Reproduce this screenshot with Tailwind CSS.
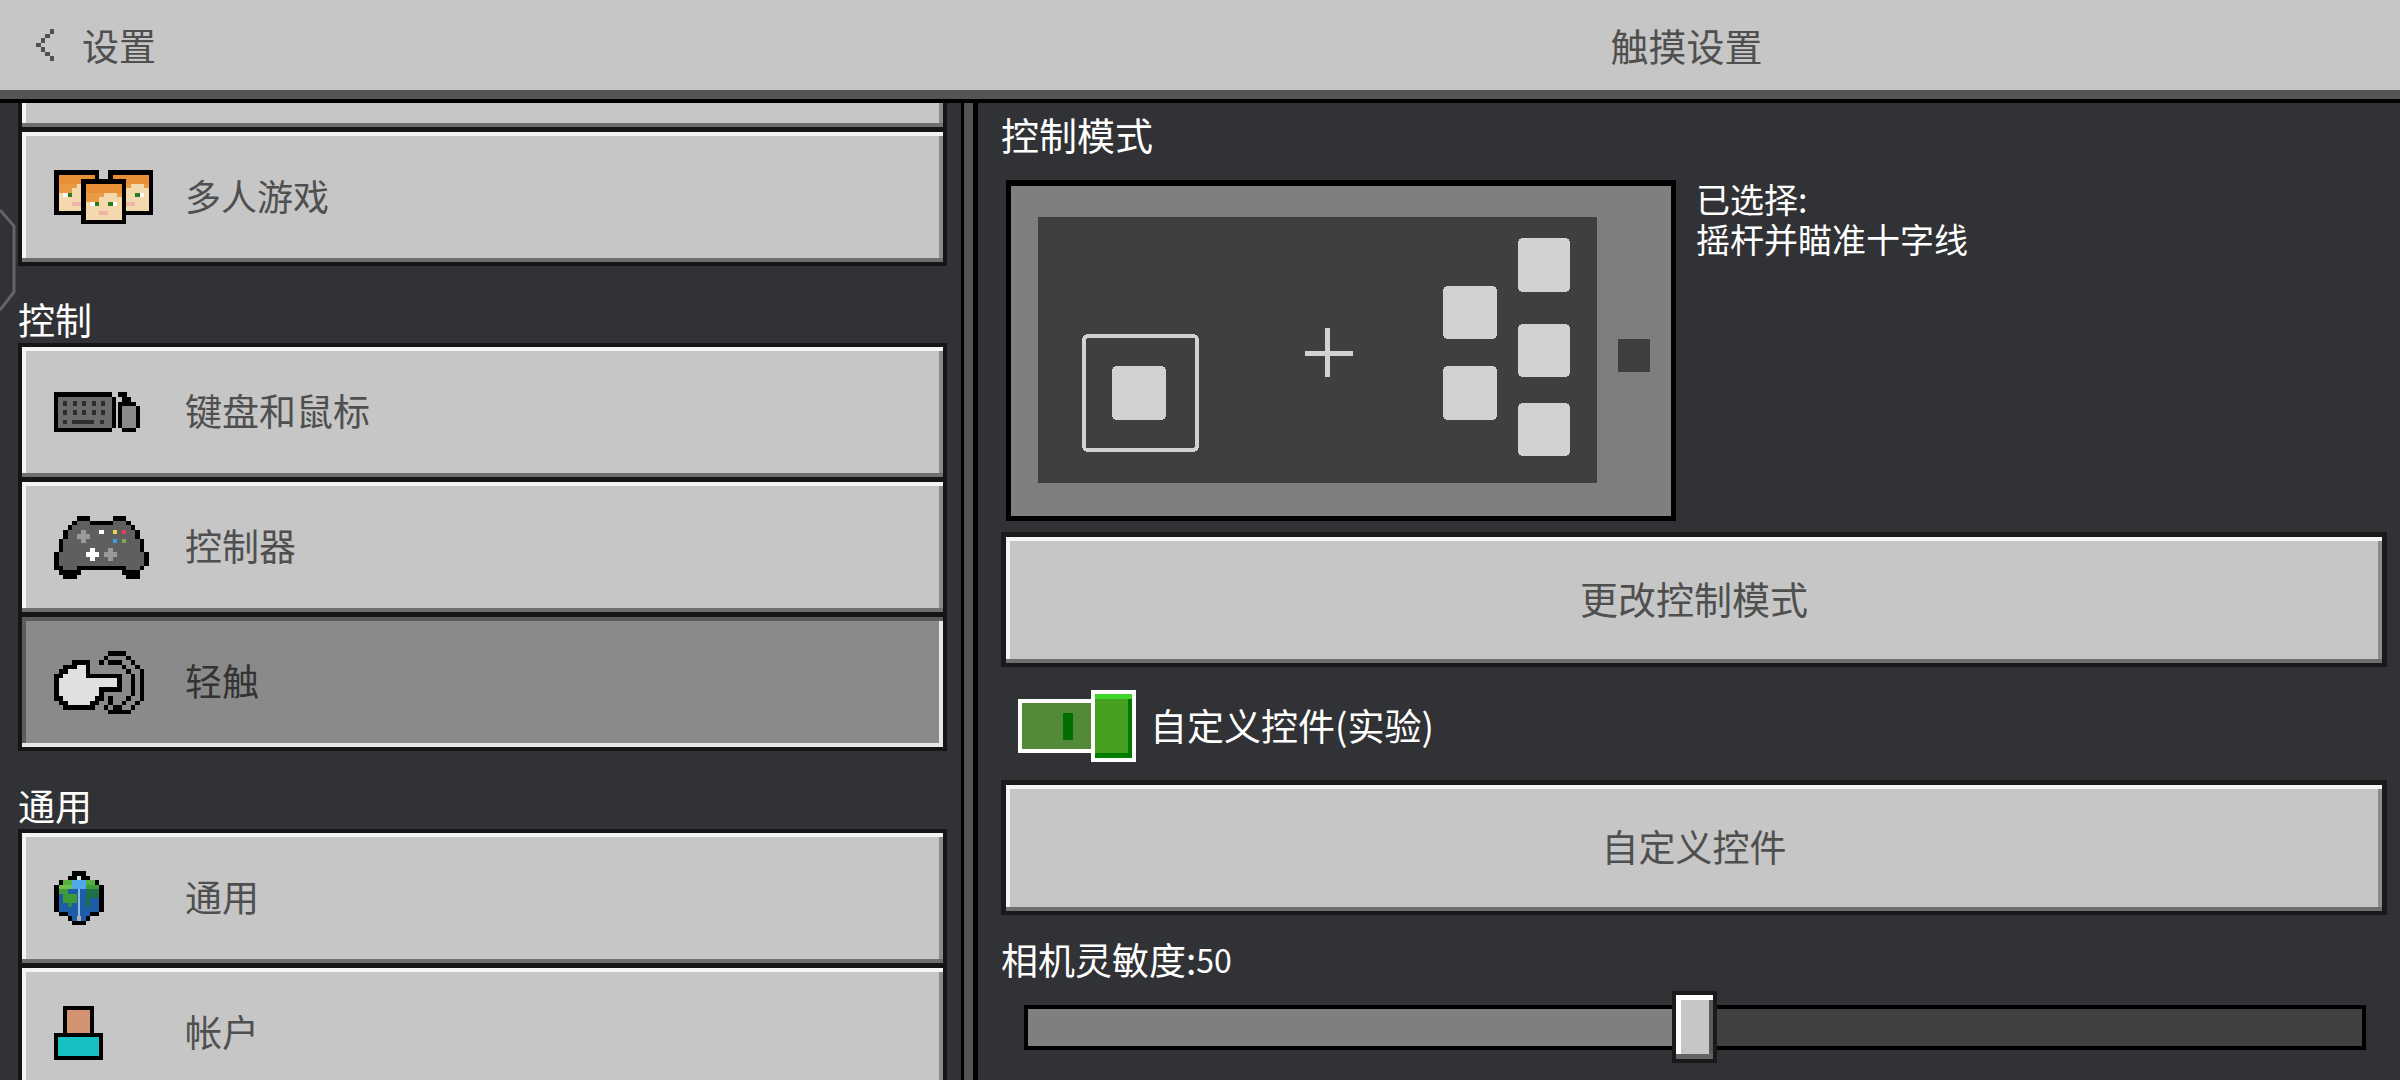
<!DOCTYPE html>
<html lang="zh-CN">
<head>
    <meta charset="UTF-8">
    <title>触摸设置</title>
    <script src="https://cdn.jsdelivr.net/npm/@tailwindcss/browser@4"></script>
</head>
<body class="w-[2400px] h-[1080px] overflow-hidden bg-[#313235] font-['Noto_Sans_CJK_SC',sans-serif] text-[37px] leading-[40px]">
    <!-- 顶栏 -->
    <header class="relative h-[90px] bg-[#c6c6c6] text-[#4f4f4f] flex items-center">
        <div class="w-[973px] flex items-center pl-[36px]">
            <svg width="18" height="32" viewBox="0 0 4 7" shape-rendering="crispEdges" fill="#505050">
                <rect x="3" y="0" width="1" height="1"/><rect x="2" y="1" width="1" height="1"/><rect x="1" y="2" width="1" height="1"/><rect x="0" y="3" width="1" height="1"/><rect x="1" y="4" width="1" height="1"/><rect x="2" y="5" width="1" height="1"/><rect x="3" y="6" width="1" height="1"/>
            </svg>
            <span class="ml-[28px]">设置</span>
        </div>
        <div class="flex-1 text-center text-[38px]">触摸设置</div>
    </header>
    <div class="h-[9px] bg-[#545355]"></div>
    <div class="h-[4px] bg-black"></div>

    <div class="relative flex h-[977px]">
        <!-- 左侧菜单 -->
        <aside class="w-[961px] shrink-0 overflow-hidden pl-[18px] pr-[14px]">
            <div class="flex flex-col gap-[5px] bg-[#151515] border-x-[4px] border-b-[4px] border-[#151515]">
                <div class="h-[24px] bg-[#c6c6c6] shadow-[inset_0_-4px_0_#6e6e6e,inset_4px_0_0_#f4f4f4,inset_-4px_0_0_#8c8c8c]"></div>
                <div class="h-[130px] flex items-center pl-[32px] bg-[#c6c6c6] text-[#4f4f4f] shadow-[inset_0_-4px_0_#6e6e6e,inset_4px_4px_0_#f4f4f4,inset_-4px_0_0_#8c8c8c]">
                    <div class="w-[131px] shrink-0">
                        <svg width="99" height="54" viewBox="0 0 22 12" shape-rendering="crispEdges">
                            <defs>
                                <g id="face">
                                    <rect width="10" height="10" fill="#000"/>
                                    <rect x="1" y="1" width="8" height="8" fill="#f5d9ae"/>
                                    <rect x="1" y="1" width="8" height="2" fill="#e88f35"/>
                                    <rect x="1" y="3" width="4" height="1" fill="#ea9a45"/>
                                    <rect x="8" y="3" width="1" height="1" fill="#ea9a45"/>
                                    <rect x="1" y="4" width="3" height="1" fill="#ea9a45"/>
                                    <rect x="2" y="5" width="1" height="1" fill="#fff"/>
                                    <rect x="3" y="5" width="1" height="1" fill="#2b7a1e"/>
                                    <rect x="6" y="5" width="1" height="1" fill="#2b7a1e"/>
                                    <rect x="7" y="5" width="1" height="1" fill="#fff"/>
                                    <rect x="4" y="7" width="2" height="1" fill="#efb5a5"/>
                                </g>
                            </defs>
                            <use href="#face" x="0" y="0"/>
                            <use href="#face" x="12" y="0"/>
                            <use href="#face" x="6" y="2"/>
                        </svg>
                    </div>
                    <span class="pb-[5px] text-[36px]">多人游戏</span>
                </div>
            </div>

            <div class="h-[77px] flex items-end text-white pb-[4px]">控制</div>
            <div class="flex flex-col gap-[5px] bg-[#151515] border-[4px] border-[#151515]">
                <div class="h-[130px] flex items-center pl-[32px] bg-[#c6c6c6] text-[#4f4f4f] shadow-[inset_0_-4px_0_#6e6e6e,inset_4px_4px_0_#f4f4f4,inset_-4px_0_0_#8c8c8c]">
                    <div class="w-[131px] shrink-0">
                        <svg width="86" height="40" viewBox="0 0 86 40" shape-rendering="crispEdges">
                            <rect x="0" y="0" width="58" height="40" fill="#000"/>
                            <rect x="4" y="5" width="54" height="31" fill="#6b6b6b"/>
                            <g fill="#2e2e2e">
                                <rect x="9" y="9" width="4" height="5"/><rect x="19" y="9" width="4" height="5"/><rect x="28" y="9" width="4" height="5"/><rect x="38" y="9" width="4" height="5"/><rect x="47" y="9" width="4" height="5"/>
                                <rect x="9" y="18" width="4" height="5"/><rect x="19" y="18" width="4" height="5"/><rect x="28" y="18" width="4" height="5"/><rect x="38" y="18" width="4" height="5"/><rect x="47" y="18" width="4" height="5"/>
                                <rect x="9" y="28" width="4" height="4"/><rect x="18" y="28" width="22" height="4"/><rect x="46" y="28" width="4" height="4"/>
                            </g>
                            <rect x="58" y="5" width="4" height="31" fill="#000"/>
                            <rect x="64" y="0" width="9" height="5" fill="#000"/>
                            <path d="M68 5H77V10H82V14H86V36H82V40H68V36H64V10H68Z" fill="#000"/>
                            <rect x="68" y="14" width="14" height="22" fill="#8a8a8a"/>
                        </svg>
                    </div>
                    <span class="pb-[5px]">键盘和鼠标</span>
                </div>
                <div class="h-[130px] flex items-center pl-[32px] bg-[#c6c6c6] text-[#4f4f4f] shadow-[inset_0_-4px_0_#6e6e6e,inset_4px_4px_0_#f4f4f4,inset_-4px_0_0_#8c8c8c]">
                    <div class="w-[131px] shrink-0">
                        <svg width="94.5" height="63" viewBox="0 0 21 14" shape-rendering="crispEdges">
                            <path d="M5 0H8V1H13V0H16V1H17V2H18V3H19V5H20V8H21V11H20V12H19V13H19V14H16V13H15V12H6V13H5V14H2V13H1V12H0V8H1V5H2V3H3V2H4V1H5Z" fill="#000"/>
                            <path d="M5 1H8V2H13V1H16V2H17V3H18V5H19V8H20V11H19V12H16V11H5V12H2V11H1V8H2V5H3V3H4V2H5Z" fill="#5f5f5f"/>
                            <path d="M6 3H7V4H8V5H7V6H6V5H5V4H6Z" fill="#9a9a9a"/>
                            <path d="M12 7H13V8H14V9H13V10H12V9H11V8H12Z" fill="#9a9a9a"/>
                            <path d="M8 7H9V8H10V9H9V10H8V9H7V8H8Z" fill="#fff"/>
                            <rect x="10" y="3" width="1" height="1" fill="#fff"/>
                            <rect x="13" y="3" width="1" height="1" fill="#e8d44d"/>
                            <rect x="15" y="3" width="1" height="1" fill="#d9435a"/>
                            <rect x="13" y="5" width="1" height="1" fill="#3d9fe0"/>
                            <rect x="15" y="5" width="1" height="1" fill="#7aa84d"/>
                        </svg>
                    </div>
                    <span class="pb-[5px]">控制器</span>
                </div>
                <div class="h-[130px] flex items-center pl-[32px] bg-[#8a8a8a] text-[#333333] shadow-[inset_0_4px_0_#5c5c5c,inset_0_-4px_0_#e8e8e8,inset_4px_0_0_#5c5c5c,inset_-4px_0_0_#e8e8e8]">
                    <div class="w-[131px] shrink-0">
                        <svg width="90" height="63" viewBox="0 0 20 14" shape-rendering="crispEdges">
                            <path d="M4.5 2.5H7.5V5.5H14.5V8.5H10.5V10.5H9.5V11.5H8.5V12.5H2.5V11.5H1.5V10.5H.5V5.5H1.5V4.5H2.5V3.5H4.5Z" fill="#e0e0e0" stroke="#000" stroke-width="1"/>
                            <path fill="#000" d="M10 2h1v1h-1zM11 1h1v1h-1zM12 0h4v1h-4zM16 1h1v1h-1zM17 2h1v1h-1zM18 3h1v1h-1zM19 4h1v7h-1zM18 11h1v1h-1zM17 12h1v1h-1zM12 13h5v1h-5zM11 12h1v1h-1z"/>
                            <path fill="#000" d="M12 2h3v1h-3zM15 3h1v1h-1zM16 4h1v1h-1zM17 5h1v5h-1zM16 10h1v1h-1zM15 11h1v1h-1zM13 12h2v1h-2zM12 10h1v2h-1z"/>
                        </svg>
                    </div>
                    <span class="pb-[5px]">轻触</span>
                </div>
            </div>

            <div class="h-[78px] flex items-end text-white pb-[4px]">通用</div>
            <div class="flex flex-col gap-[5px] bg-[#151515] border-[4px] border-[#151515]">
                <div class="h-[130px] flex items-center pl-[32px] bg-[#c6c6c6] text-[#4f4f4f] shadow-[inset_0_-4px_0_#6e6e6e,inset_4px_4px_0_#f4f4f4,inset_-4px_0_0_#8c8c8c]">
                    <div class="w-[131px] shrink-0">
                        <svg width="49.5" height="54" viewBox="0 0 11 12" shape-rendering="crispEdges">
                            <path d="M4 0H7V1H8V2H10V3H11V9H10V10H8V11H7V12H4V11H3V10H1V9H0V3H1V2H3V1H4Z" fill="#000"/>
                            <path d="M5 1H6V2H8V3H10V9H8V10H7V11H4V10H3V9H1V3H3V2H5Z" fill="#1d5ca6"/>
                            <rect x="2" y="2" width="7" height="1" fill="#55b13f"/>
                            <rect x="1" y="3" width="3" height="1" fill="#6cc24a"/>
                            <rect x="1" y="4" width="2" height="1" fill="#3f9a3a"/>
                            <rect x="4" y="2" width="3" height="2" fill="#4fa8e8"/>
                            <rect x="7" y="3" width="3" height="1" fill="#3f9a3a"/>
                            <rect x="7" y="4" width="3" height="2" fill="#1f6f4a"/>
                            <rect x="2" y="5" width="3" height="2" fill="#3f9a3a"/>
                            <rect x="3" y="7" width="1" height="1" fill="#2f8a3f"/>
                            <rect x="7" y="6" width="1" height="2" fill="#1f6f4a"/>
                            <rect x="5.25" y="4" width=".5" height="6" fill="#8cbce8"/>
                            <rect x="5" y="1" width="1" height="1" fill="#cfe6ee"/>
                            <rect x="5" y="10" width="1" height="1" fill="#b0b0b0"/>
                        </svg>
                    </div>
                    <span class="pb-[5px]">通用</span>
                </div>
                <div class="h-[130px] flex items-center pl-[32px] bg-[#c6c6c6] text-[#4f4f4f] shadow-[inset_0_-4px_0_#6e6e6e,inset_4px_4px_0_#f4f4f4,inset_-4px_0_0_#8c8c8c]">
                    <div class="w-[131px] shrink-0">
                        <svg width="49" height="54" viewBox="0 0 49 54" shape-rendering="crispEdges">
                            <rect x="9" y="0" width="31" height="30" fill="#000"/>
                            <rect x="13" y="4" width="23" height="24" fill="#d29470"/>
                            <rect x="0" y="27" width="49" height="27" fill="#000"/>
                            <rect x="4" y="31" width="41" height="19" fill="#17bfc0"/>
                        </svg>
                    </div>
                    <span class="pb-[5px]">帐户</span>
                </div>
            </div>
        </aside>

        <!-- 分隔条 -->
        <div class="w-[3px] shrink-0 bg-black"></div>
        <div class="w-[9px] shrink-0 bg-[#545355]"></div>
        <div class="w-[5px] shrink-0 bg-black"></div>

        <!-- 右侧面板 -->
        <main class="flex-1 pl-[23px] pr-[13px] text-white">
            <div class="h-[77px] leading-[62px] text-[38px]">控制模式</div>
            <div class="flex items-start">
                <div class="ml-[5px] w-[670px] h-[341px] border-t-[6px] border-x-[5px] border-b-[5px] border-black bg-[#7f7f7f]">
                    <svg width="660" height="330" viewBox="1011 186 660 330" shape-rendering="crispEdges" class="block">
                        <rect x="1038" y="217" width="559" height="266" fill="#3f3f3f"/>
                        <rect x="1618" y="339" width="32" height="33" fill="#3f3f3f"/>
                        <rect x="1084" y="336" width="113" height="114" rx="4" fill="none" stroke="#d2d2d2" stroke-width="4"/>
                        <g fill="#d2d2d2">
                            <rect x="1112" y="366" width="54" height="54" rx="5"/>
                            <rect x="1305" y="351" width="48" height="5"/>
                            <rect x="1325" y="328" width="5" height="49"/>
                            <rect x="1443" y="286" width="54" height="53" rx="5"/>
                            <rect x="1443" y="366" width="54" height="54" rx="5"/>
                            <rect x="1518" y="238" width="52" height="54" rx="5"/>
                            <rect x="1518" y="324" width="52" height="53" rx="5"/>
                            <rect x="1518" y="403" width="52" height="53" rx="5"/>
                        </g>
                    </svg>
                </div>
                <div class="ml-[20px] -mt-[1px] text-[34px]">
                    <div>已选择:</div>
                    <div>摇杆并瞄准十字线</div>
                </div>
            </div>

            <div class="mt-[11px] h-[135px] pb-[5px] border-t-[5px] border-x-[5px] border-b-[4px] border-[#1a1a1a] flex items-center justify-center bg-[#c6c6c6] text-[#4f4f4f] text-[38px] shadow-[inset_0_-4px_0_#6e6e6e,inset_4px_4px_0_#f4f4f4,inset_-4px_0_0_#8c8c8c]">更改控制模式</div>

            <div class="mt-[23px] h-[72px] flex items-center">
                <div class="ml-[17px] w-[73px] h-[54px] flex items-center border-[4px] border-r-0 border-white bg-[#528a3a] pl-[41px]">
                    <div class="w-[10px] h-[27px] bg-[#006e00]"></div>
                </div>
                <div class="w-[45px] h-[72px] border-[4px] border-white bg-[#45a020] shadow-[inset_0_5px_0_#3dd42b,inset_0_-5px_0_#007b00,inset_-4px_0_0_#007b00]"></div>
                <span class="ml-[14px] pb-[3px]">自定义控件(实验)</span>
            </div>

            <div class="mt-[18px] h-[135px] pb-[5px] border-t-[5px] border-x-[5px] border-b-[4px] border-[#1a1a1a] flex items-center justify-center bg-[#c6c6c6] text-[#4f4f4f] shadow-[inset_0_-4px_0_#6e6e6e,inset_4px_4px_0_#f4f4f4,inset_-4px_0_0_#8c8c8c]">自定义控件</div>

            <div class="h-[90px] pb-[2px] flex items-center">相机灵敏度:<span class="text-[32px]">50</span></div>

            <div class="relative ml-[23px] w-[1342px] h-[45px] flex border-y-[4px] border-x-[4px] border-black bg-[#414141]">
                <div class="w-[644px] bg-[#7f7f7f]"></div>
                <!-- 滑块 -->
                <div class="absolute left-[644px] top-[-18px] w-[45px] h-[72px] border-[4px] border-[#1a1a1a] bg-[#c6c6c6] shadow-[inset_0_-5px_0_#646464,inset_5px_5px_0_#ffffff,inset_-4px_0_0_#5a5a5a]"></div>
            </div>
        </main>

        <!-- 左边缘的装饰线 -->
        <svg class="absolute left-0 top-[103px] pointer-events-none" width="16" height="110" viewBox="0 0 16 110" fill="none">
            <path d="M0 4L14 20V86L0 104" stroke="#636466" stroke-width="3"/>
        </svg>
    </div>
</body>
</html>
